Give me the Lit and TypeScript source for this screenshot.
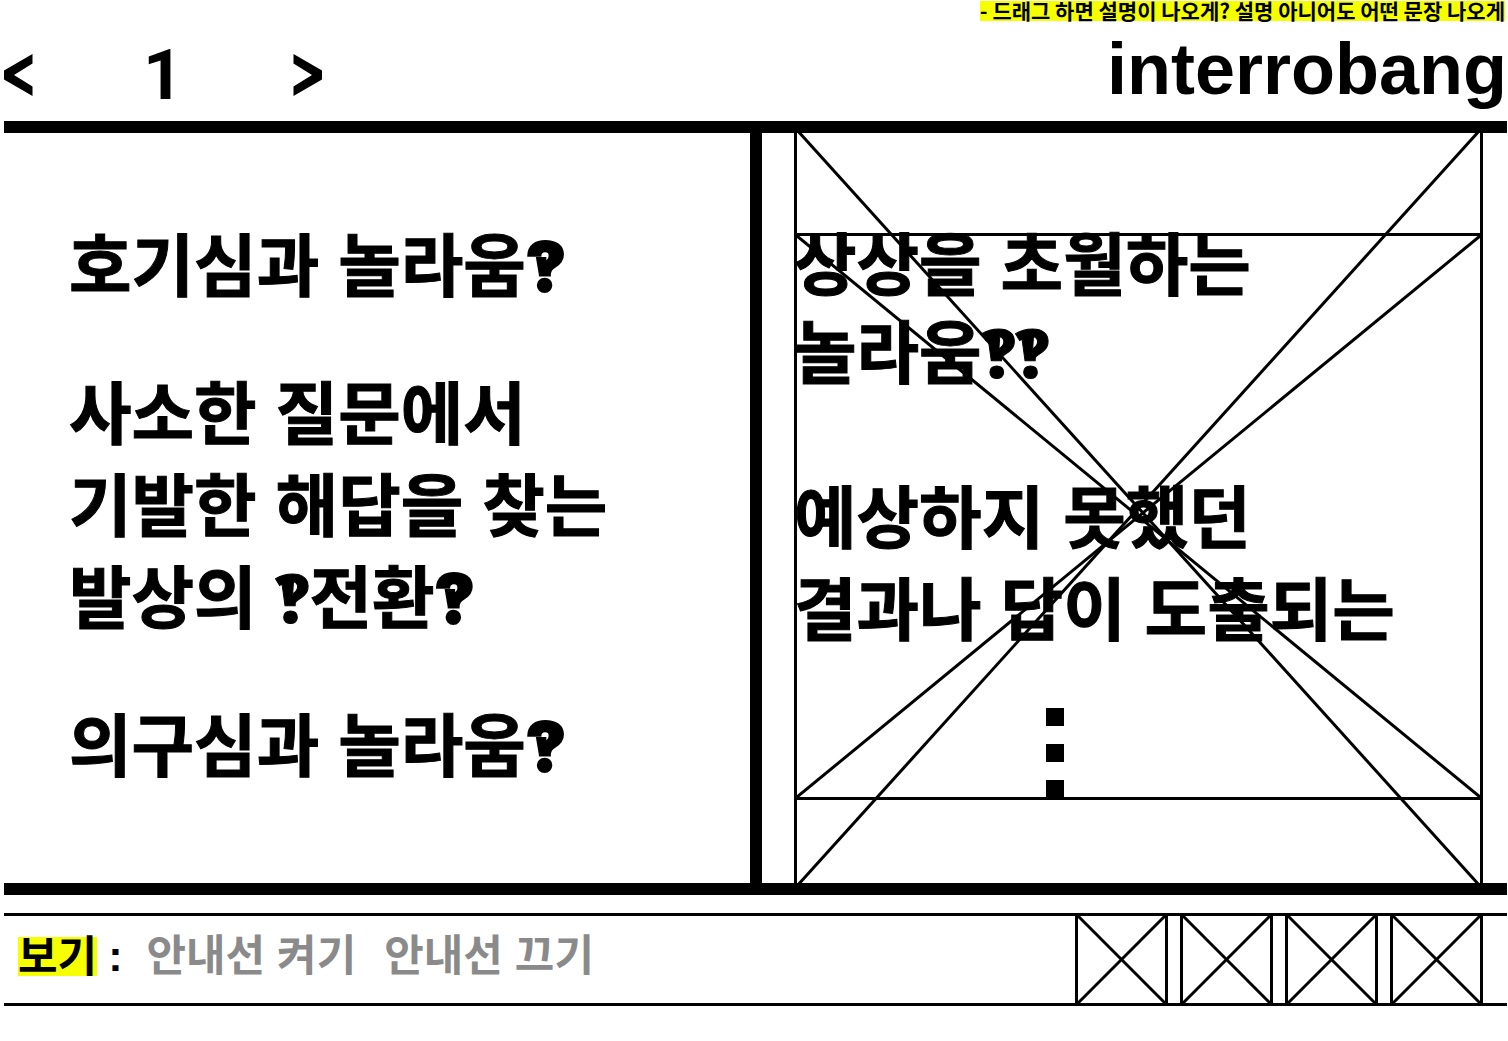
import { LitElement, html, css, svg } from "lit";
import { customElement, state } from "lit/decorators.js";

/** Crossed placeholder frame that stretches to its grid cell. */
@customElement("cross-box")
class CrossBox extends LitElement {
  static styles = css`
    :host {
      display: block;
      box-sizing: border-box;
      border: 3px solid #000;
      contain: size;
    }
    .cross {
      display: block;
      width: 100%;
      height: 100%;
      overflow: hidden;
    }
    .line {
      stroke: #000;
      stroke-width: 3px;
      vector-effect: non-scaling-stroke;
    }
  `;

  render() {
    return html`<svg class="cross" viewBox="0 0 100 100" preserveAspectRatio="none" aria-hidden="true">
      ${svg`<line class="line" x1="0" y1="0" x2="100" y2="100"></line>
      <line class="line" x1="100" y1="0" x2="0" y2="100"></line>`}
    </svg>`;
  }
}

@customElement("app-root")
class AppRoot extends LitElement {
  @state() page = 1;
  @state() guides = true;

  static styles = css`
    :host {
      display: block;
      background: #fff;
      color: #000;
      font-family: "Liberation Sans", "Noto Sans CJK KR", sans-serif;
      font-weight: 700;
    }
    .page {
      box-sizing: border-box;
      min-height: 100vh;
      display: flex;
      flex-direction: column;
      padding: 1px 1px 35px 4px;
    }
    p,
    h1 {
      margin: 0;
    }
    button {
      font: inherit;
      color: inherit;
      background: none;
      border: 0;
      padding: 0;
      cursor: pointer;
    }
    .note {
      align-self: flex-end;
      margin-right: 2px;
      padding-bottom: 2px;
      background: #f5ff00;
      font-family: "Noto Sans CJK KR", sans-serif;
      font-size: 21px;
      line-height: 18px;
    }
    .bar {
      display: flex;
      justify-content: space-between;
      height: 100px;
    }
    .pager {
      display: flex;
      align-items: center;
      justify-content: space-between;
      width: 318px;
      padding-top: 8px;
      box-sizing: border-box;
      font-family: Roboto, sans-serif;
      font-size: 70px;
      line-height: 90px;
    }
    .chevron {
      display: block;
      width: 29px;
      height: 42px;
    }
    .brand {
      font-size: 72px;
      line-height: 96px;
    }
    .spread {
      flex: 1;
      display: grid;
      grid-template-columns: 746fr 12px 745fr;
      border-top: 12px solid #000;
      border-bottom: 12px solid #000;
    }
    .divider {
      background: #000;
    }
    .copy {
      font-size: 68px;
      line-height: 92px;
      white-space: nowrap;
      -webkit-text-stroke: 1px #000;
    }
    .mark {
      font-weight: 900;
      font-size: 67px;
      line-height: 0;
    }
    .heavy {
      font-family: Inter, sans-serif;
      -webkit-text-stroke: 2px #000;
    }
    .light {
      font-family: "Noto Sans", sans-serif;
    }
    .left {
      padding: 88px 0 0 65px;
      display: flex;
      flex-direction: column;
      gap: 56px;
    }
    .right {
      display: grid;
      padding: 0 24px 0 32px;
    }
    .frame {
      grid-area: 1 / 1;
    }
    .tall {
      margin: -6px 0;
      clip-path: inset(6px 0);
    }
    .wide {
      margin: 100px 0 83px;
    }
    .answers {
      grid-area: 1 / 1;
      padding-top: 89px;
      display: flex;
      flex-direction: column;
      gap: 75px;
    }
    .tight {
      line-height: 88px;
    }
    .dots {
      display: grid;
      gap: 18px;
      width: 18px;
      margin: -24px 0 0 252px;
    }
    .dot {
      height: 18px;
      background: #000;
    }
    .tools {
      display: flex;
      justify-content: space-between;
      margin-top: 18px;
      height: 93px;
      box-sizing: border-box;
      border-top: 3px solid #000;
      border-bottom: 3px solid #000;
    }
    .view {
      display: flex;
      align-items: flex-start;
      padding-left: 14px;
      font-size: 43px;
      line-height: 80px;
    }
    .label {
      margin-top: 21px;
      padding-top: 1px;
      line-height: 38px;
      background: #f5ff00;
    }
    .colon {
      padding: 0 24px 0 11px;
    }
    .view button {
      color: #8a8a8a;
      margin-right: 28px;
    }
    .thumbs {
      display: grid;
      grid-template-columns: repeat(4, 93px);
      gap: 12px;
      padding-right: 24px;
    }
    .thumb {
      border-top: 0;
      border-bottom: 0;
    }
  `;

  private turn(step: number) {
    this.page = Math.max(1, this.page + step);
  }

  private mark(kind: "heavy" | "light") {
    return html`<span class="mark ${kind}">‽</span>`;
  }

  render() {
    return html`<div class="page">
      <p class="note">- 드래그 하면 설명이 나오게? 설명 아니어도 어떤 문장 나오게</p>
      <header class="bar">
        <nav class="pager">
          <button aria-label="이전" @click=${() => this.turn(-1)}>
            <svg class="chevron" viewBox="0 0 29 42"><path d="M28.500 0v9.500L10 21l18.500 11.500V42L0 25.500v-9z" /></svg>
          </button>
          <span>${this.page}</span>
          <button aria-label="다음" @click=${() => this.turn(1)}>
            <svg class="chevron" viewBox="0 0 29 42"><path d="M.5 0v9.500L19 21 .5 32.500V42L29 25.500v-9z" /></svg>
          </button>
        </nav>
        <h1 class="brand">interrobang</h1>
      </header>
      <main class="spread">
        <section class="copy left">
          <p>호기심과 놀라움${this.mark("heavy")}</p>
          <p>
            사소한 질문에서<br />기발한 해답을 찾는<br />발상의
            ${this.mark("light")}전환${this.mark("heavy")}
          </p>
          <p>의구심과 놀라움${this.mark("heavy")}</p>
        </section>
        <div class="divider"></div>
        <section class="copy right">
          ${this.guides
            ? html`<cross-box class="frame tall"></cross-box>
                <cross-box class="frame wide"></cross-box>`
            : ""}
          <div class="answers">
            <p class="tight">
              상상을 초월하는<br />놀라움${this.mark("light")}${this.mark("light")}
            </p>
            <p>예상하지 못했던<br />결과나 답이 도출되는</p>
            <div class="dots">
              <div class="dot"></div>
              <div class="dot"></div>
              <div class="dot"></div>
            </div>
          </div>
        </section>
      </main>
      <footer class="tools">
        <div class="view">
          <span class="label">보기</span><span class="colon">:</span>
          <button @click=${() => (this.guides = true)}>안내선 켜기</button>
          <button @click=${() => (this.guides = false)}>안내선 끄기</button>
        </div>
        <div class="thumbs">
          ${[1, 2, 3, 4].map(() => html`<cross-box class="thumb"></cross-box>`)}
        </div>
      </footer>
    </div>`;
  }
}
